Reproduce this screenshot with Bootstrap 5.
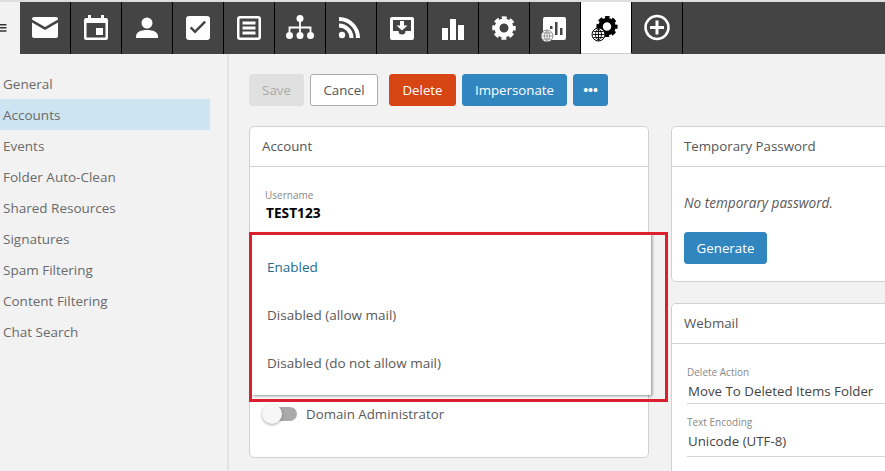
<!DOCTYPE html>
<html lang="en"><head><meta charset="utf-8"><title>Accounts</title>
<link rel="stylesheet" href="https://cdn.jsdelivr.net/npm/bootstrap@5.3.0/dist/css/bootstrap.min.css">
<style>
html,body{height:471px;overflow:hidden}
body{background:#f2f2f2;font-family:"Open Sans","Noto Sans",sans-serif;font-size:13.3px;color:#595959}
.topstrip{height:54px;border-top:2px solid #dedede;background:#444}
.burger{width:20px;background:#f2f2f2;color:#333}
.tabx{width:51px;border-right:1px solid #000;color:#fff}
.tabx svg{width:30px;height:30px;display:block;margin-top:-1px}
.tabx.on{background:#fff;color:#000;border-bottom:1px solid #ccc}
.sidewrap{width:229px;border-right:2px solid #e4e4e4;padding-top:14px;height:417px}
.sidelink{display:block;height:31px;line-height:33px;width:210px;padding-left:3px;color:#6a6a6a;text-decoration:none;font-size:13.5px}
.sidelink.on{background:#cde4f2}
.mainarea{padding:20px 0 0 20px;min-width:0;overflow:hidden}
.btnx{height:32px;font-size:13.3px;padding:0;border-radius:3px;line-height:30px}
.btn-save{width:55px;background:#e0e0e0;border-color:#e0e0e0;color:#aaa}
.btn-cancel{width:68px;background:#fff;border-color:#aaa;color:#555;margin-left:6px}
.btn-del{width:67px;background:#d64513;border-color:#d64513;color:#fff;margin-left:11px}
.btn-blue{background:#3286c0;border-color:#3286c0;color:#fff;margin-left:6px}
.btn-imp{width:105px}
.btn-more{width:35px;font-size:13px;font-weight:700}
.btn-gen{width:83px;margin:19px 0 0}
.cardsrow{margin-top:20px}
.cardx{border:1px solid #d2d2d2;border-radius:5px;background:#fff}
.cardx .card-header{height:40px;line-height:39px;padding:0 12px;background:#fff;border-bottom:1px solid #d2d2d2;color:#555}
.col-left{width:400px;height:332px;flex:none;position:relative}
.col-right{width:400px;flex:none;margin-left:22px}
.card-temp{height:156px}
.card-web{height:220px;margin-top:21px}
.bodytemp{padding:26px 12px 0}
.notemp{line-height:20px;font-size:13.6px}
.bodyfields{padding:22px 15px 0}
.labelx{font-size:10px;color:#888;line-height:12px}
.labelgap{margin-top:12px}
.namex{line-height:20px;padding-left:1px;margin-top:2px;font-size:13.7px}
.valx{font-size:13.3px;color:#444;line-height:20px;padding-left:1px;margin-top:3px}
.fieldx{border-bottom:1px solid #d5d5d5;height:38px}
.field2{height:26px}
.menux{position:absolute;left:2px;top:106px;width:399px;height:162px;background:#fff;padding:10px 0 8px;box-shadow:1px 1px 3px rgba(0,0,0,.45);z-index:2;font-size:13.5px}
.menux div{height:48px;line-height:48px;padding-left:15px}
.menux .isactive{color:#1c6b8c}
.redbox{position:absolute;left:-1px;top:105px;width:419px;height:170px;border:3px solid #dc1f2e;z-index:3;pointer-events:none}
.toggletrack{width:32px;height:14px;background:#aaa;border-radius:7px;position:relative;margin-left:15px}
.toggleknob{position:absolute;left:-3px;top:-3px;width:20px;height:20px;border-radius:50%;background:#f7f7f7;box-shadow:0 1px 3px rgba(0,0,0,.35)}
.admrow{position:absolute;left:0;top:280px}
.admlabel{margin-left:9px;line-height:14px}
</style></head><body>
<div class="topstrip d-flex">
<div class="burger d-flex align-items-center"><svg width="7" height="8" viewBox="0 0 7 8"><path d="M0 0.7h6.5M0 3.8h6.5M0 6.9h6.5" stroke="#333" stroke-width="1.5"/></svg></div>
<div class="tabx d-flex align-items-center justify-content-center"><svg viewBox="0 0 30 30"><path fill="currentColor" d="M4 4h22a2 2 0 0 1 2 2v0.5L15 14 2 6.500V6a2 2 0 0 1 2-2zM2 9.500l13 7.500 13-7.500V23a2 2 0 0 1-2 2H4a2 2 0 0 1-2-2z"/></svg></div>
<div class="tabx d-flex align-items-center justify-content-center"><svg viewBox="0 0 30 30"><path fill="currentColor" fill-rule="evenodd" d="M7 2h3v3h10V2h3v3h2a2 2 0 0 1 2 2v18a2 2 0 0 1-2 2H5a2 2 0 0 1-2-2V7a2 2 0 0 1 2-2h2zM5.500 10v14.500h19V10zM15 15h7v7h-7z"/></svg></div>
<div class="tabx d-flex align-items-center justify-content-center"><svg viewBox="0 0 30 30"><circle cx="15" cy="10" r="5.500" fill="currentColor"/><path fill="currentColor" d="M4 25v-1.500C4 19 9 17 15 17s11 2 11 6.500V25z"/></svg></div>
<div class="tabx d-flex align-items-center justify-content-center"><svg viewBox="0 0 30 30"><path fill="currentColor" fill-rule="evenodd" d="M6 3h18a3 3 0 0 1 3 3v18a3 3 0 0 1-3 3H6a3 3 0 0 1-3-3V6a3 3 0 0 1 3-3zM8.500 13.500l-1.700 1.700 5.200 5.200 11-11-1.700-1.700-9.300 9.300z"/></svg></div>
<div class="tabx d-flex align-items-center justify-content-center"><svg viewBox="0 0 30 30"><path fill="currentColor" fill-rule="evenodd" d="M6 3h18a3 3 0 0 1 3 3v18a3 3 0 0 1-3 3H6a3 3 0 0 1-3-3V6a3 3 0 0 1 3-3zM6.500 5.500a1 1 0 0 0-1 1v17a1 1 0 0 0 1 1h17a1 1 0 0 0 1-1v-17a1 1 0 0 0-1-1zM8.500 8.500h13v3h-13zM8.500 13.500h13v3h-13zM8.500 18.500h13v3h-13z"/></svg></div>
<div class="tabx d-flex align-items-center justify-content-center"><svg viewBox="0 0 30 30"><circle cx="15" cy="5.500" r="3.500" fill="currentColor"/><circle cx="4.500" cy="22.500" r="3.500" fill="currentColor"/><circle cx="15" cy="22.500" r="3.500" fill="currentColor"/><circle cx="25.500" cy="22.500" r="3.500" fill="currentColor"/><path d="M15 8v11M4.500 19v-4.500h21V19" stroke="currentColor" stroke-width="1.800" fill="none"/></svg></div>
<div class="tabx d-flex align-items-center justify-content-center"><svg viewBox="0 0 30 30"><circle cx="6" cy="22" r="3.200" fill="currentColor"/><path d="M3 12.500a12.500 12.500 0 0 1 12.500 12.500M3 6a19 19 0 0 1 19 19" stroke="currentColor" stroke-width="4" fill="none"/></svg></div>
<div class="tabx d-flex align-items-center justify-content-center"><svg viewBox="0 0 30 30"><path fill="currentColor" fill-rule="evenodd" d="M5 4h20a2 2 0 0 1 2 2v19a2 2 0 0 1-2 2H5a2 2 0 0 1-2-2V6a2 2 0 0 1 2-2zM6 7v11h5.500a3.500 3.500 0 0 0 7 0H24V7zM13 8h4v4.500h3.500L15 17.500l-5.500-5H13z"/></svg></div>
<div class="tabx d-flex align-items-center justify-content-center"><svg viewBox="0 0 30 30"><path fill="currentColor" d="M4 15h6v12H4zM12 6h6v21h-6zM20 12h6v15h-6z"/></svg></div>
<div class="tabx d-flex align-items-center justify-content-center"><svg viewBox="0 0 30 30"><circle cx="15" cy="15" r="7" fill="none" stroke="currentColor" stroke-width="5"/><circle cx="15" cy="15" r="10" fill="none" stroke="currentColor" stroke-width="3.500" stroke-dasharray="4.800 3.050" stroke-dashoffset="2.400"/></svg></div>
<div class="tabx d-flex align-items-center justify-content-center"><svg viewBox="0 0 30 30"><path fill="currentColor" fill-rule="evenodd" d="M5 4h19a2 2 0 0 1 2 2v19a2 2 0 0 1-2 2H5a2 2 0 0 1-2-2V6a2 2 0 0 1 2-2zM15 9v13h2.500V9zM20 15v7h2.500v-7zM10 13v3h2.500v-3z"/><circle cx="7" cy="23" r="6" fill="#fff" stroke="#444" stroke-width=".6"/><path d="M1.500 23h11M7 17.500v11M2.500 20h9M2.500 26h9M7 17.500c-3.500 3-3.500 8 0 11M7 17.500c3.500 3 3.500 8 0 11" stroke="#777" stroke-width=".7" fill="none"/></svg></div>
<div class="tabx on d-flex align-items-center justify-content-center"><svg viewBox="0 0 30 30"><circle cx="16" cy="14.500" r="6.500" fill="none" stroke="currentColor" stroke-width="4.500"/><circle cx="16" cy="14.500" r="9" fill="none" stroke="currentColor" stroke-width="3.200" stroke-dasharray="4.400 2.670" stroke-dashoffset="2.200"/><circle cx="7.500" cy="22.500" r="6.500" fill="#fff" stroke="#000" stroke-width="1"/><path d="M1.500 22.500h12M7.500 16.500v12M2.500 19.500h10M2.500 25.500h10M7.500 16.500c-4 3-4 9 0 12M7.500 16.500c4 3 4 9 0 12" stroke="#000" stroke-width=".9" fill="none"/></svg></div>
<div class="tabx d-flex align-items-center justify-content-center"><svg viewBox="0 0 30 30"><circle cx="15" cy="14.500" r="11.500" fill="none" stroke="currentColor" stroke-width="2.500"/><path d="M15 7.500v14M8 14.500h14" stroke="currentColor" stroke-width="3"/></svg></div>
</div>
<div class="d-flex">
<nav class="sidewrap flex-shrink-0">
<a class="sidelink" href="#">General</a>
<a class="sidelink on" href="#">Accounts</a>
<a class="sidelink" href="#">Events</a>
<a class="sidelink" href="#">Folder Auto-Clean</a>
<a class="sidelink" href="#">Shared Resources</a>
<a class="sidelink" href="#">Signatures</a>
<a class="sidelink" href="#">Spam Filtering</a>
<a class="sidelink" href="#">Content Filtering</a>
<a class="sidelink" href="#">Chat Search</a>
</nav>
<main class="mainarea flex-grow-1">
<div class="d-flex">
<button class="btn btnx btn-save">Save</button>
<button class="btn btnx btn-cancel">Cancel</button>
<button class="btn btnx btn-del">Delete</button>
<button class="btn btnx btn-blue btn-imp">Impersonate</button>
<button class="btn btnx btn-blue btn-more">•••</button>
</div>
<div class="d-flex cardsrow">
<div class="card cardx col-left">
<div class="card-header">Account</div>
<div class="card-body bodyfields">
<div class="labelx">Username</div>
<div class="fw-bold text-black namex">TEST123</div>
</div>
<div class="admrow d-flex align-items-center"><div class="toggletrack"><span class="toggleknob"></span></div><span class="admlabel">Domain Administrator</span></div>
<div class="menux"><div class="isactive">Enabled</div><div>Disabled (allow mail)</div><div>Disabled (do not allow mail)</div></div>
<div class="redbox"></div>
</div>
<div class="col-right">
<div class="card cardx card-temp">
<div class="card-header">Temporary Password</div>
<div class="card-body bodytemp">
<div class="fst-italic notemp">No temporary password.</div>
<button class="btn btnx btn-blue btn-gen">Generate</button>
</div></div>
<div class="card cardx card-web">
<div class="card-header">Webmail</div>
<div class="card-body bodyfields">
<div class="fieldx"><div class="labelx">Delete Action</div><div class="valx">Move To Deleted Items Folder</div></div>
<div class="labelx labelgap">Text Encoding</div>
<div class="fieldx field2"><div class="valx">Unicode (UTF-8)</div></div>
<div class="labelx labelgap">Compose Font</div>
</div></div>
</div>
</div>
</main>
</div>
</body></html>
